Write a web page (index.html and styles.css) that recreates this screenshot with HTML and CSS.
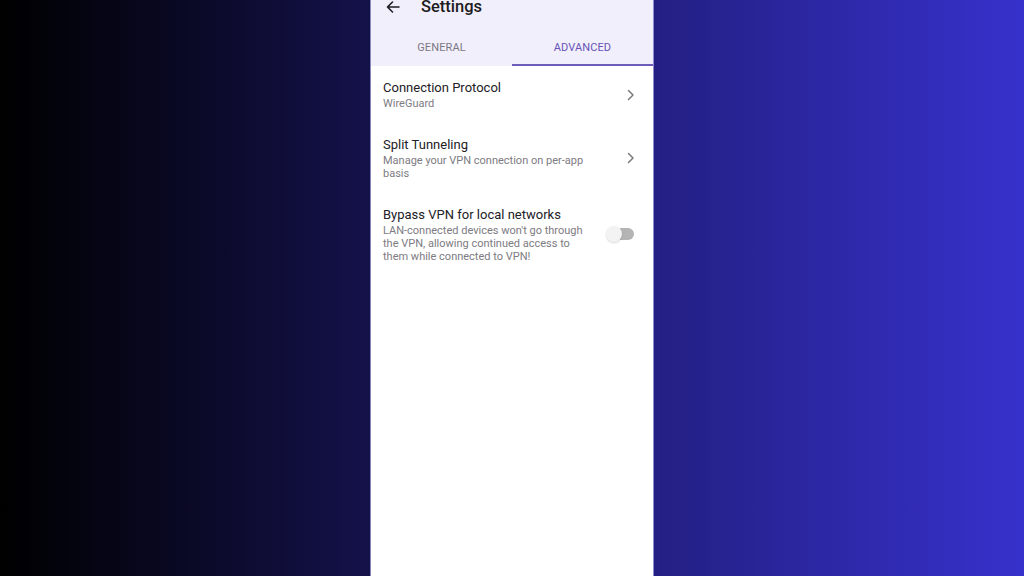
FILE: index.html
```html
<!DOCTYPE html>
<html>
<head>
<meta charset="utf-8">
<link rel="stylesheet" href="styles.css">
</head>
<body>
<div class="stage">
  <div class="phone">
    <div class="header">
      <div class="titlebar">
        <svg class="back" width="14" height="12" viewBox="0 0 14 12"><path d="M13 6H1.5M6.5 1L1.5 6L6.5 11" fill="none" stroke="#1f1d24" stroke-width="1.6" stroke-linecap="round" stroke-linejoin="round"/></svg>
        <span class="title">Settings</span>
      </div>
      <div class="tabs">
        <div class="tab">GENERAL</div>
        <div class="tab active">ADVANCED</div>
      </div>
    </div>
    <div class="list">
      <div class="row">
        <div class="text">
          <div class="rtitle">Connection Protocol</div>
          <div class="rsub">WireGuard</div>
        </div>
        <svg class="chev" width="8" height="12" viewBox="0 0 8 12"><path d="M1.5 1.5L6 6L1.5 10.5" fill="none" stroke="#7a7a7a" stroke-width="1.5" stroke-linecap="round" stroke-linejoin="round"/></svg>
      </div>
      <div class="row">
        <div class="text">
          <div class="rtitle">Split Tunneling</div>
          <div class="rsub">Manage your VPN connection on per-app basis</div>
        </div>
        <svg class="chev" width="8" height="12" viewBox="0 0 8 12"><path d="M1.5 1.5L6 6L1.5 10.5" fill="none" stroke="#7a7a7a" stroke-width="1.5" stroke-linecap="round" stroke-linejoin="round"/></svg>
      </div>
      <div class="row">
        <div class="text">
          <div class="rtitle">Bypass VPN for local networks</div>
          <div class="rsub">LAN-connected devices won't go through the VPN, allowing continued access to them while connected to VPN!</div>
        </div>
        <div class="switch"><div class="thumb"></div></div>
      </div>
    </div>
  </div>
</div>
</body>
</html>
```
FILE: styles.css
```css
* { box-sizing: border-box; }
html, body { margin: 0; padding: 0; }
body {
  width: 1024px;
  height: 576px;
  overflow: hidden;
  background: linear-gradient(to right, #000000 0%, #3731cc 100%);
  font-family: Roboto, "Noto Sans", sans-serif;
}
.stage {
  display: flex;
  height: 576px;
  padding-left: 371px;
}
.phone {
  width: 282px;
  height: 576px;
  background: #ffffff;
  box-shadow: 0 0 0 1px rgba(190, 185, 235, 0.7);
  display: flex;
  flex-direction: column;
}
.header {
  background: #f2effc;
  height: 66px;
  display: flex;
  flex-direction: column;
}
.titlebar {
  height: 28px;
  display: flex;
  align-items: flex-start;
  padding-left: 15px;
  margin-top: -1px;
}
.back { margin-top: 2px; }
.title {
  margin-left: 21px;
  font-size: 16.5px;
  line-height: 17px;
  color: #1c1b20;
  font-weight: 500;
  margin-top: -1px;
}
.tabs {
  display: flex;
  flex: 1;
  margin-top: 1px;
}
.tab {
  flex: 1;
  display: flex;
  align-items: center;
  justify-content: center;
  font-size: 11px;
  letter-spacing: 0.1px;
  color: #7b7883;
  border-bottom: 2px solid transparent;
  padding-top: 3px;
}
.tab.active {
  color: #6753b6;
  border-bottom-color: #6e5cb9;
}
.list {
  display: flex;
  flex-direction: column;
}
.row {
  display: flex;
  align-items: center;
  padding: 13.5px 18px 13.5px 12px;
}
.text {
  flex: 1;
  max-width: 212px;
}
.rtitle {
  font-size: 13px;
  line-height: 16px;
  color: #222125;
}
.rsub {
  margin-top: 1px;
  font-size: 11px;
  line-height: 13px;
  color: #7d7b82;
}
.chev { margin-left: auto; }
.switch {
  margin-left: auto;
  margin-right: 1px;
  margin-bottom: 1px;
  width: 25px;
  height: 12px;
  border-radius: 6px;
  background: #b4b4b4;
  position: relative;
}
.thumb {
  position: absolute;
  left: -3px;
  top: -2px;
  width: 16px;
  height: 16px;
  border-radius: 50%;
  background: #f3f3f3;
  box-shadow: 0 1px 2px rgba(0,0,0,0.15);
}
```
